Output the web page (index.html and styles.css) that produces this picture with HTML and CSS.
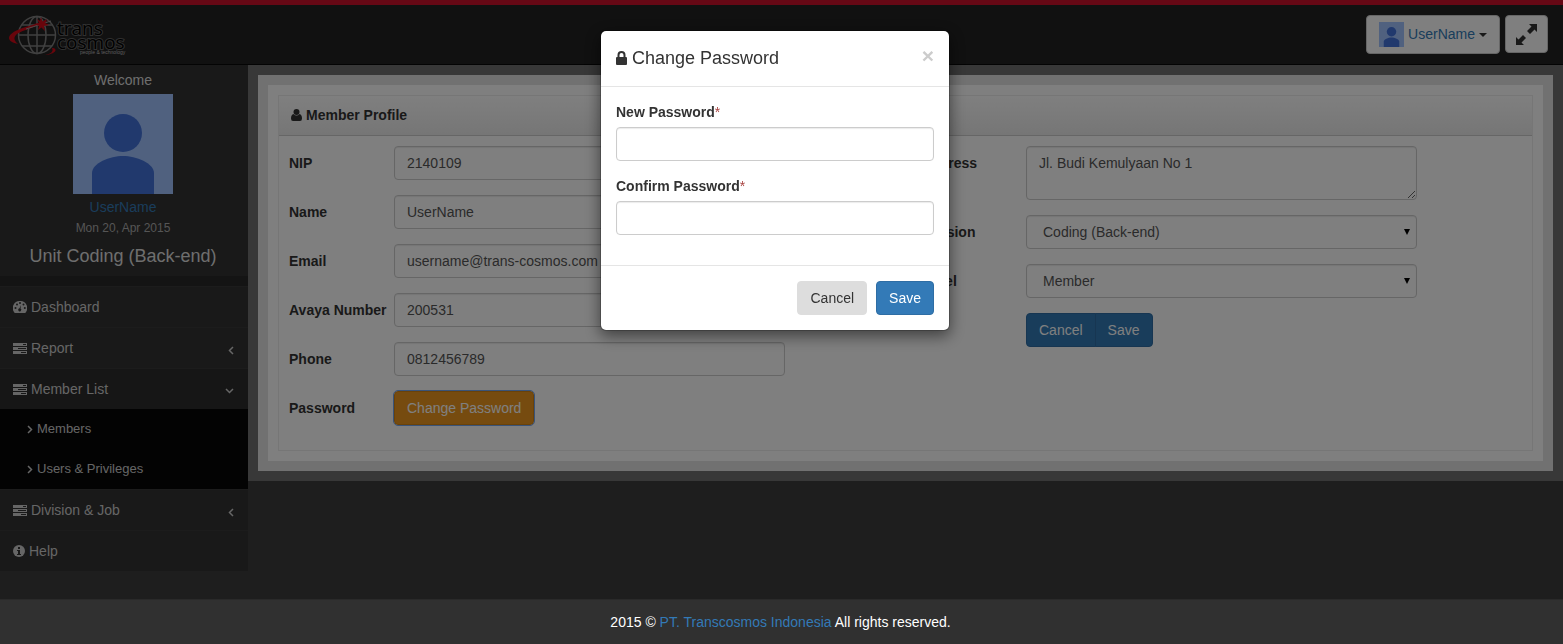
FILE: index.html
```html
<!DOCTYPE html>
<html lang="en">
<head>
<meta charset="utf-8">
<title>Member Profile</title>
<link rel="stylesheet" href="styles.css">
</head>
<body>
<svg class="sprite" aria-hidden="true">
  <symbol id="avatar" viewBox="0 0 100 100"><rect width="100" height="100" fill="#a0c3ff"/><circle cx="50" cy="39" r="19" fill="#4272db"/><path d="M19 100V79C19 69 37 62 50 62s31 7 31 17v21z" fill="#4272db"/></symbol>
  <symbol id="server" viewBox="0 0 14 11"><path fill="currentColor" fill-rule="evenodd" d="M0 0h14v3H0zM10 1v1h3V1zM0 4h14v3H0zM5 5v1h8V5zM0 8h14v3H0zM8 9v1h5V9z"/></symbol>
  <symbol id="chevron" viewBox="0 0 6 9"><path d="M5 1 1.500 4.500 5 8" fill="none" stroke="currentColor" stroke-width="1.500"/></symbol>
</svg>

<header class="topbar">
  <a class="brand" href="#" aria-label="trans cosmos">
    <svg width="130" height="44" viewBox="6 14 130 44">
      <g fill="none" stroke="#808080" stroke-width="1.500">
        <circle cx="37" cy="35" r="18.500"/><ellipse cx="37" cy="35" rx="9" ry="18.500"/>
        <path d="M37 17v36M19 35h37M22 25h30M22 46h30"/>
      </g>
      <path d="M50 20C35 25 10 29 9 38c0 3 4 5 9 6-4-3-5-7-1-10 6-4 19-7 33-14z" fill="#d00a18"/>
      <path d="M26 29C36 26 44 23 51 21" fill="none" stroke="#999"/>
      <path d="M41 17l1.500 4.500L47 19l-2 4 4 2-5 1 1 5-3.500-3.500L38 30l1-4-5-2 5-1-2-4 3 2z" fill="#d00a18"/>
      <path d="M52 48c6 0 5 6-7 7 5-1 9-3 7-7z" fill="#d00a18"/>
      <g class="wordmark"><text x="57" y="35">trans</text><text x="57" y="49">cosmos</text></g>
      <text class="tagline" x="80" y="54">people &amp; technology</text>
    </svg>
  </a>
  <div class="top-actions">
    <button class="top-btn user-btn" type="button">
      <svg width="25" height="25"><use href="#avatar"/></svg><span>UserName</span>
      <svg width="8" height="4" viewBox="0 0 8 4"><path d="M0 0h8L4 4z" fill="#333"/></svg>
    </button>
    <button class="top-btn expand-btn" type="button" aria-label="Full screen">
      <svg width="21" height="21" viewBox="0 0 21 21" fill="#333"><path d="M13 0h8v8l-2.500-2.500L14 10l-3-3 4.500-4.500zM8 21H0v-8l2.500 2.500L7 11l3 3-4.500 4.500z"/></svg>
    </button>
  </div>
</header>

<div class="layout">
  <nav class="sidebar">
    <section class="profile">
      <p>Welcome</p>
      <svg width="100" height="100"><use href="#avatar"/></svg>
      <a href="#">UserName</a>
      <small>Mon 20, Apr 2015</small>
      <h2>Unit Coding (Back-end)</h2>
    </section>
    <ul class="menu">
      <li><a href="#"><svg width="14" height="12" viewBox="0 0 14 12"><path fill="currentColor" d="M7 0a7 7 0 0 0-6 11q.4 1 1 1h10q.6 0 1-1A7 7 0 0 0 7 0"/><g fill="#323232"><circle cx="2.500" cy="7" r="1"/><circle cx="4" cy="3.500" r="1"/><circle cx="7" cy="2" r="1"/><circle cx="10.500" cy="3.500" r="1"/><circle cx="11.800" cy="7" r="1"/><path d="M8 4 7.500 7.500a1.500 1.500 0 1 1-1-.2z"/></g></svg>Dashboard</a></li>
      <li><a href="#"><svg width="14" height="11"><use href="#server"/></svg>Report<svg class="arrow" width="6" height="9"><use href="#chevron"/></svg></a></li>
      <li class="active"><a href="#"><svg width="14" height="11"><use href="#server"/></svg>Member List<svg class="arrow" width="9" height="6" viewBox="0 0 9 6"><path d="M1 1l3.500 3.500L8 1" fill="none" stroke="currentColor" stroke-width="1.500"/></svg></a>
        <ul class="submenu">
          <li><a href="#"><svg width="6" height="9" viewBox="0 0 6 9"><path d="M1 1l3.500 3.500L1 8" fill="none" stroke="currentColor" stroke-width="1.500"/></svg>Members</a></li>
          <li><a href="#"><svg width="6" height="9" viewBox="0 0 6 9"><path d="M1 1l3.500 3.500L1 8" fill="none" stroke="currentColor" stroke-width="1.500"/></svg>Users &amp; Privileges</a></li>
        </ul>
      </li>
      <li><a href="#"><svg width="14" height="11"><use href="#server"/></svg>Division &amp; Job<svg class="arrow" width="6" height="9"><use href="#chevron"/></svg></a></li>
      <li><a href="#"><svg width="12" height="12" viewBox="0 0 12 12"><circle cx="6" cy="6" r="6" fill="currentColor"/><path d="M5 2h2v2H5zM4 5h3v4h1v1H4V9h1V6H4z" fill="#323232"/></svg>Help</a></li>
    </ul>
  </nav>

  <main class="main">
    <div class="frame">
      <div class="sheet">
        <section class="panel">
          <h1><svg width="11" height="12" viewBox="0 0 11 12" fill="#333"><circle cx="5.500" cy="3" r="3"/><path d="M2.500 5Q5.500 8 8.500 5q2.500.5 2.500 4.500 0 2.500-2 2.500H2q-2 0-2-2.500Q0 5.500 2.500 5"/></svg>Member Profile</h1>
          <form class="columns">
            <div class="column">
              <div class="row"><label for="nip">NIP</label><input class="control" id="nip" value="2140109"></div>
              <div class="row"><label for="name">Name</label><input class="control" id="name" value="UserName"></div>
              <div class="row"><label for="email">Email</label><input class="control" id="email" value="username@trans-cosmos.com"></div>
              <div class="row"><label for="avaya">Avaya Number</label><input class="control" id="avaya" value="200531"></div>
              <div class="row"><label for="phone">Phone</label><input class="control" id="phone" value="0812456789"></div>
              <div class="row"><label for="change">Password</label><div><button class="btn warning" id="change" type="button">Change Password</button></div></div>
            </div>
            <div class="column">
              <div class="row"><label for="address">Address</label><textarea class="control" id="address">Jl. Budi Kemulyaan No 1</textarea></div>
              <div class="row"><label for="division">Division</label><div class="select"><select class="control" id="division"><option>Coding (Back-end)</option></select><svg width="6" height="6" viewBox="0 0 6 6"><path d="M0 0h6L3 6z"/></svg></div></div>
              <div class="row"><label for="level">Level</label><div class="select"><select class="control" id="level"><option>Member</option></select><svg width="6" height="6" viewBox="0 0 6 6"><path d="M0 0h6L3 6z"/></svg></div></div>
              <div class="row"><div class="group"><button class="btn primary" type="button">Cancel</button><button class="btn primary" type="button">Save</button></div></div>
            </div>
          </form>
        </section>
      </div>
    </div>
  </main>
</div>

<footer class="footer"><p>2015 © <a href="#">PT. Transcosmos Indonesia</a> All rights reserved.</p></footer>

<div class="backdrop">
  <form class="modal" role="dialog" aria-labelledby="modal-title">
    <div class="modal-head">
      <h2 id="modal-title"><svg width="11" height="14" viewBox="0 0 11 14"><path d="M2.500 7V4a3 3 0 0 1 6 0v3" fill="none" stroke="#333" stroke-width="2"/><rect y="6" width="11" height="8" rx="1" fill="#333"/></svg>Change Password</h2>
      <button class="close" type="button" aria-label="Close">×</button>
    </div>
    <div class="modal-body">
      <label for="new-pass">New Password<span>*</span></label>
      <input class="control" id="new-pass" type="password">
      <label for="confirm-pass">Confirm Password<span>*</span></label>
      <input class="control" id="confirm-pass" type="password">
    </div>
    <div class="modal-foot">
      <button class="btn muted" type="button">Cancel</button>
      <button class="btn primary" type="button">Save</button>
    </div>
  </form>
</div>
</body>
</html>
```
FILE: styles.css
```css
* { box-sizing: border-box; }
body {
  margin: 0;
  min-height: 100vh;
  display: flex;
  flex-direction: column;
  background: #3c3c3c;
  color: #333;
  font: 14px/20px "Liberation Sans", Arial, sans-serif;
}
h1, h2, p, ul { margin: 0; padding: 0; }
ul { list-style: none; }
a { color: #337ab7; text-decoration: none; }
button, input, select, textarea { font: inherit; }
svg { flex: none; }
.sprite { position: absolute; width: 0; height: 0; }

.topbar {
  display: flex;
  justify-content: space-between;
  align-items: flex-start;
  height: 65px;
  padding: 9px 15px 0 6px;
  border-top: 5px solid #cc102a;
  border-bottom: 1px solid #080808;
  background: #222;
}
.brand svg { display: block; }
.wordmark {
  font-family: "Open Sans", sans-serif;
  font-size: 19px;
  fill: #000;
  stroke: #606060;
  stroke-width: 2px;
  paint-order: stroke;
}
.tagline { font: 5px "Liberation Sans", Arial, sans-serif; fill: #bbb; }
.top-actions { display: flex; align-items: flex-start; gap: 5px; padding-top: 1px; }
.top-btn {
  display: flex;
  align-items: center;
  border: 1px solid #ccc;
  border-radius: 4px;
  background: #fff;
  color: #337ab7;
}
.user-btn { height: 39px; padding: 0 12px; gap: 4px; }
.user-btn span { padding-bottom: 2px; }
.expand-btn { height: 38px; padding: 0 10px; }

.layout { display: flex; align-items: flex-start; flex: 1; }
.sidebar { flex: none; width: 248px; background: #323232; color: #ddd; }
.profile {
  display: flex;
  flex-direction: column;
  align-items: center;
  height: 211px;
  padding: 5px 2px 0 0;
}
.profile svg { margin: 4px 0 3px; }
.profile small { font-size: 12px; line-height: 22px; color: #aaa; }
.profile h2 { margin-top: 7px; font-size: 18px; font-weight: 400; line-height: 20px; }
.menu { padding-top: 10px; background: #292929; }
.menu > li { border-top: 1px solid #383838; background: #323232; }
.menu > .active { background: #2d2d2d; }
.menu a { display: flex; align-items: center; gap: 4px; height: 40px; padding: 0 14px 0 13px; color: #ccc; }
.menu .arrow { margin: 4px 0 0 auto; }
.submenu { background: #060606; }
.submenu a { padding-left: 27px; font-size: 13px; }

.main { flex: 1; padding: 10px; background: #707070; }
.frame { padding: 10px; background: #e2e2e2; }
.sheet { padding: 10px; background: #fff; }
.panel { border: 1px solid #ececec; }
.panel h1 {
  display: flex;
  align-items: center;
  gap: 4px;
  height: 40px;
  padding: 0 0 2px 12px;
  border-bottom: 1px solid #ccc;
  background: linear-gradient(#fff, #ececec);
  font-size: 14px;
}
.columns { display: grid; grid-template-columns: 1fr 1fr; gap: 31px; padding: 10px 10px 0; }
.row { display: grid; grid-template-columns: 105px 391fr 105fr; margin-bottom: 15px; }
.column:first-child .row:last-child { margin-bottom: 25px; }
.row label { padding-top: 7px; font-weight: 700; white-space: nowrap; }
.control {
  display: block;
  width: 100%;
  height: 34px;
  padding: 6px 12px;
  border: 1px solid #ccc;
  border-radius: 4px;
  background: #fff;
  box-shadow: inset 0 1px 1px rgba(0, 0, 0, .08);
  color: #555;
}
textarea.control { height: 54px; }
.select { position: relative; }
.select select { appearance: none; padding-left: 16px; }
.select svg { position: absolute; right: 7px; top: 14px; pointer-events: none; }
.btn {
  height: 34px;
  padding: 6px 12px;
  border: 1px solid;
  border-radius: 4px;
  line-height: 20px;
}
.warning { border-color: #d58512; background: #ec971f; color: #fff; outline: 1px solid #75a7f0; outline-offset: 0; }
.primary { border-color: #2e6da4; background: #337ab7; color: #fff; }
.muted { border-color: #ddd; background: #ddd; color: #333; }
.group { grid-column: 2; display: flex; }
.group .btn:first-child { border-radius: 4px 0 0 4px; }
.group .btn:last-child { margin-left: -1px; border-radius: 0 4px 4px 0; }

.footer {
  position: relative;
  z-index: 2;
  padding: 12px 2px 12px 0;
  border-top: 1px solid #2a2a2a;
  background: #303030;
  color: #fff;
  text-align: center;
}

.backdrop {
  position: fixed;
  inset: 0;
  z-index: 1;
  padding: 30px 13px 0 0;
  background: rgba(0, 0, 0, .5);
}
.modal {
  max-width: 350px;
  margin: 0 auto;
  border: 1px solid rgba(0, 0, 0, .2);
  border-radius: 6px;
  background: #fff;
  background-clip: padding-box;
  box-shadow: 0 5px 15px rgba(0, 0, 0, .5);
}
.modal-head {
  display: flex;
  justify-content: space-between;
  align-items: flex-start;
  padding: 15px;
  border-bottom: 1px solid #e5e5e5;
}
.modal-head h2 { display: flex; align-items: center; gap: 5px; font-size: 18px; font-weight: 400; line-height: 25px; }
.modal-head h2 svg { margin-bottom: 2px; }
.close { padding: 0; border: 0; background: none; color: #ccc; font-size: 21px; font-weight: 700; line-height: 20px; }
.modal-body { padding: 15px 15px 30px; }
.modal-body label { display: block; margin-bottom: 5px; font-weight: 700; }
.modal-body label span { color: #a94442; font-weight: 400; }
.modal-body .control + label { margin-top: 15px; }
.modal-foot { display: flex; justify-content: flex-end; gap: 9px; padding: 15px; border-top: 1px solid #e5e5e5; }
```
